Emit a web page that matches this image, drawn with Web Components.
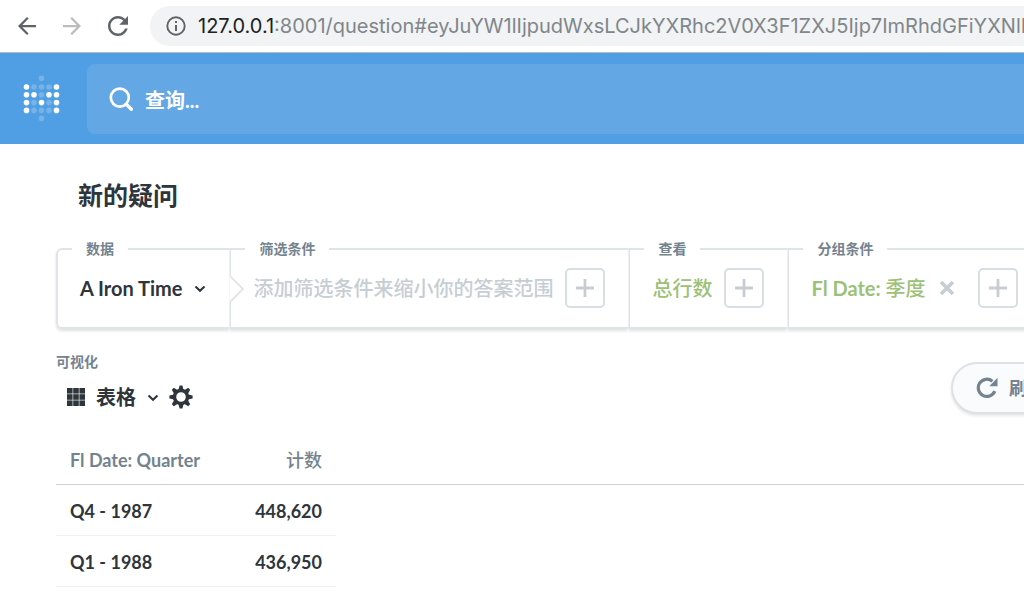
<!DOCTYPE html>
<html lang="zh">
<head>
<meta charset="utf-8">
<title>新的疑问</title>
<style>
body { margin: 0; background: #fff; overflow: hidden; }
</style>
</head>
<body>
<app-window></app-window>
<script>
const base = `
  *, *::before, *::after { box-sizing: border-box; }
  button { font: inherit; color: inherit; background: none; border: 0; padding: 0; margin: 0; display: flex; align-items: center; white-space: nowrap; }
  svg { display: block; flex: none; }
`;
function define(name, css, html) {
  customElements.define(name, class extends HTMLElement {
    constructor() {
      super();
      const t = document.createElement('template');
      const markup = typeof html === 'function' ? html(this) : html;
      t.innerHTML = `<style>${base}${css}</style>${markup}`;
      this.attachShadow({ mode: 'open' }).append(t.content.cloneNode(true));
    }
  });
}
const reloadPath = 'M17.65 6.35C16.2 4.9 14.21 4 12 4c-4.42 0-7.99 3.58-7.99 8s3.57 8 7.99 8c3.73 0 6.84-2.55 7.73-6h-2.08c-.82 2.33-3.04 4-5.65 4-3.31 0-6-2.69-6-6s2.69-6 6-6c1.66 0 3.14.69 4.22 1.78L13 11h7V4z';
const teeth = Array.from({ length: 8 }, (_, i) => `<path transform="rotate(${i * 45} 12 12)" d="M9.4 5 10.6.4h2.8L14.6 5z"/>`).join('');
const tiles = [0, 1, 2].flatMap(r => [0, 1, 2].map(c => `<rect x="${c * 6.2}" y="${r * 6.2}" width="5.6" height="5.6"/>`)).join('');
const icons = {
  back: [18, '4 4 16 16', '<path fill="currentColor" d="M20 11H7.83l5.59-5.59L12 4l-8 8 8 8 1.41-1.41L7.83 13H20z"/>'],
  forward: [18, '4 4 16 16', '<path fill="currentColor" d="M4 11h12.17l-5.59-5.59L12 4l8 8-8 8-1.41-1.41L16.17 13H4z"/>'],
  reload: [20, '4 4 16 16', `<path fill="currentColor" d="${reloadPath}"/>`],
  info: [20, '0 0 20 20', '<circle cx="10" cy="10" r="8.7" fill="none" stroke="currentColor" stroke-width="1.9"/><path fill="currentColor" d="M9 5h2v2H9zM9 9h2v6H9z"/>'],
  search: [24, '0 0 24 24', '<circle cx="10.8" cy="10.6" r="9" fill="none" stroke="currentColor" stroke-width="2.7"/><path d="m17.3 17.2 5 5" stroke="currentColor" stroke-width="3.4" stroke-linecap="round"/>'],
  chevron: [12, '0 0 12 12', '<path d="m1.5 4.5 4.5 4.2 4.5-4.2" fill="none" stroke="currentColor" stroke-width="2.1"/>'],
  plus: [18, '0 0 18 18', '<path d="M9 0v18M0 9h18" stroke="currentColor" stroke-width="2.8"/>'],
  close: [16, '0 0 16 16', '<path d="m2 2 12 12M14 2 2 14" stroke="currentColor" stroke-width="3.6"/>'],
  grid: [18, '0 0 18 18', `<g fill="currentColor">${tiles}</g>`],
  gear: [24, '0 0 24 24', `<g fill="currentColor">${teeth}</g><circle cx="12" cy="12" r="6.5" fill="none" stroke="currentColor" stroke-width="3.4"/>`],
  refresh: [22, '0 0 22 22', '<path d="M18.8 14.2A8.6 8.6 0 1 1 16.4 4.2" fill="none" stroke="currentColor" stroke-width="3.2"/><path fill="currentColor" d="M21.5.8v8.4h-8.2z"/>']
};
define('app-icon', ':host { display: block; flex: none; }', el => {
  const [size, box, body] = icons[el.getAttribute('name')];
  return `<svg width="${size}" height="${size}" viewBox="${box}" aria-hidden="true">${body}</svg>`;
});

define('browser-bar', `
  :host { display: flex; align-items: center; height: 53px; padding: 0 0 1px 18px; border-bottom: 1px solid #b5bcc0; color: #5f6368; background: #fff; font: 20px/24px Inter, "Liberation Sans", sans-serif; }
  nav { display: flex; align-items: center; gap: 27px; margin-right: 22px; }
  .off { color: #babcbe; }
  .address { flex: 1; min-width: 0; display: flex; align-items: center; gap: 12px; height: 40px; padding-left: 16px; border-radius: 20px 0 0 20px; background: #f1f3f4; overflow: hidden; white-space: nowrap; color: #80868b; }
  b { font-weight: 400; color: #202124; }
`, `
  <nav><button aria-label="后退"><app-icon name="back"></app-icon></button><button class="off" aria-label="前进"><app-icon name="forward"></app-icon></button><button aria-label="重新加载"><app-icon name="reload"></app-icon></button></nav>
  <div class="address"><app-icon name="info" style="color:#5f6368"></app-icon><span><b>127.0.0.1</b>:8001/question#eyJuYW1lIjpudWxsLCJkYXRhc2V0X3F1ZXJ5Ijp7ImRhdGFiYXNlI</span></div>
`);

const bright = ['10001', '11011', '10101', '10001'];
const dots = bright.flatMap((row, r) => [...row].map((v, c) => `<circle cx="${3 + c * 7.5}" cy="${12 + r * 7.8}" r="2.8"${v === '1' ? '' : ' opacity=".22"'}/>`)).join('');
define('brand-logo', ':host { display: block; } a { display: block; }', `
  <a href="#" aria-label="Metabase"><svg width="37" height="47" viewBox="0 0 36 47" fill="#fff">${dots}<circle cx="18" cy="3.2" r="2.8" opacity=".22"/><circle cx="18" cy="43.4" r="2.8" opacity=".22"/></svg></a>
`);

define('app-header', `
  :host { display: flex; align-items: center; gap: 27px; height: 91px; padding-left: 23px; background: #509ee3; color: #fff; }
  label { flex: 1; min-width: 0; display: flex; align-items: center; gap: 12px; height: 70px; padding-left: 22px; border-radius: 8px 0 0 8px; background: #63a8e5; }
  input { flex: 1; min-width: 0; border: 0; outline: 0; padding: 2px 0 0; background: none; color: #fff; font: inherit; font-weight: 700; line-height: 28px; }
  input::placeholder { color: #fff; opacity: 1; }
`, `
  <brand-logo></brand-logo>
  <label><app-icon name="search"></app-icon><input type="text" placeholder="查询..." aria-label="查询"></label>
`);

define('add-button', `
  :host { display: block; }
  button { width: 40px; height: 40px; justify-content: center; border: 2px solid #d8dee2; border-radius: 5px; color: #c6ced4; }
`, '<button aria-label="添加"><app-icon name="plus"></app-icon></button>');

define('query-section', `
  :host { display: block; position: relative; flex: none; }
  :host([last]) { flex: 1 0 auto; }
  fieldset { display: block; min-width: 0; margin: 0; padding: 0 0 10px; border: 2px solid #dfe4e7; border-right: 0; box-shadow: 0 2px 3px rgba(0,0,0,.12); clip-path: inset(0 0 -8px 0); }
  :host([first]) fieldset { border-radius: 6px 0 0 6px; clip-path: inset(0 0 -8px -8px); }
  legend { margin-left: 14px; padding: 0 14px; font-size: 14px; line-height: 20px; font-weight: 700; color: #74838f; }
  .row { display: flex; align-items: center; height: 58px; padding: 0 23px 0 22px; white-space: nowrap; }
`, '<fieldset><legend><slot name="title"></slot></legend><div class="row"><slot></slot></div></fieldset>');

define('query-builder', `
  :host { display: flex; color: #2e353b; font-size: 20px; line-height: 28px; font-weight: 700; }
  .data { gap: 12px; }
  .hint { margin-right: 12px; color: #c6ced4; font-weight: 500; }
  .green { color: #9cc177; }
  .green span { font-weight: 500; }
  .count { margin-right: 12px; font-weight: 500; }
  .close { margin: 0 23px 0 13px; color: #c6ced4; }
  .notch { position: absolute; left: 0; top: 36px; }
`, `
  <query-section first><span slot="title">数据</span><button class="data">A Iron Time <app-icon name="chevron"></app-icon></button></query-section>
  <query-section><span slot="title">筛选条件</span><svg class="notch" width="16" height="28" viewBox="0 0 16 28"><path d="M0 1h1l13 13L1 27H0z" fill="#fff"/><path d="m1 1 13 13L1 27" fill="none" stroke="#dce1e5" stroke-width="1.6"/></svg><button class="hint">添加筛选条件来缩小你的答案范围</button><add-button></add-button></query-section>
  <query-section><span slot="title">查看</span><button class="green count">总行数</button><add-button></add-button></query-section>
  <query-section last><span slot="title">分组条件</span><button class="green"><div>Fl Date: <span>季度</span></div></button><button class="close" aria-label="移除"><app-icon name="close"></app-icon></button><add-button></add-button></query-section>
`);

define('visualization-bar', `
  :host { display: flex; justify-content: space-between; align-items: flex-start; color: #2e353b; font-weight: 700; }
  .label { font-size: 14px; line-height: 20px; color: #74838f; }
  .controls { display: flex; align-items: center; gap: 10px; margin-top: 11px; padding-left: 11px; font-size: 20px; line-height: 28px; }
  .kind { gap: 11px; }
  .refresh { gap: 11px; height: 52px; margin-top: 10px; padding: 0 24px 0 23px; border: 2px solid #dde2e4; border-radius: 26px; background: #f9fbfc; color: #74838f; font-size: 18px; box-shadow: 0 2px 3px rgba(0,0,0,.1); }
`, `
  <div><div class="label">可视化</div><div class="controls"><button class="kind"><app-icon name="grid"></app-icon>表格<app-icon name="chevron"></app-icon></button><button aria-label="设置"><app-icon name="gear"></app-icon></button></div></div>
  <button class="refresh"><app-icon name="refresh"></app-icon>刷新</button>
`);

define('result-table', `
  :host { display: block; color: #2e353b; font-size: 18px; line-height: 24px; font-weight: 700; }
  table { width: 100%; border-collapse: separate; border-spacing: 0; table-layout: fixed; }
  .a { width: 184px; }
  .b { width: 96px; }
  th, td { padding: 2px 14px 0; text-align: left; font-weight: 700; white-space: nowrap; }
  th { height: 48px; padding: 0 14px 2px; color: #74838f; border-bottom: 1px solid #cdd4d6; }
  td { height: 51px; border-bottom: 1px solid #eff0f1; }
  .n { text-align: right; }
  th.n { font-weight: 500; }
  td:last-child { border: 0; }
`, `
  <table><colgroup><col class="a"><col class="b"><col></colgroup>
    <thead><tr><th>Fl Date: Quarter</th><th class="n">计数</th><th></th></tr></thead>
    <tbody><tr><td>Q4 - 1987</td><td class="n">448,620</td><td></td></tr><tr><td>Q1 - 1988</td><td class="n">436,950</td><td></td></tr></tbody>
  </table>
`);

define('app-window', `
  :host { display: block; overflow: hidden; font: 20px/28px Lato, "Noto Sans CJK SC", sans-serif; }
  main { display: flex; flex-direction: column; margin-right: -47px; padding: 35px 0 0 56px; }
  h1 { margin: 0 0 28px; padding-left: 22px; font-size: 25px; line-height: 32px; font-weight: 700; color: #2e353b; }
  visualization-bar { margin: 23px 0; }
`, `
  <browser-bar></browser-bar>
  <app-header></app-header>
  <main><h1>新的疑问</h1><query-builder></query-builder><visualization-bar></visualization-bar><result-table></result-table></main>
`);
</script>
</body>
</html>
